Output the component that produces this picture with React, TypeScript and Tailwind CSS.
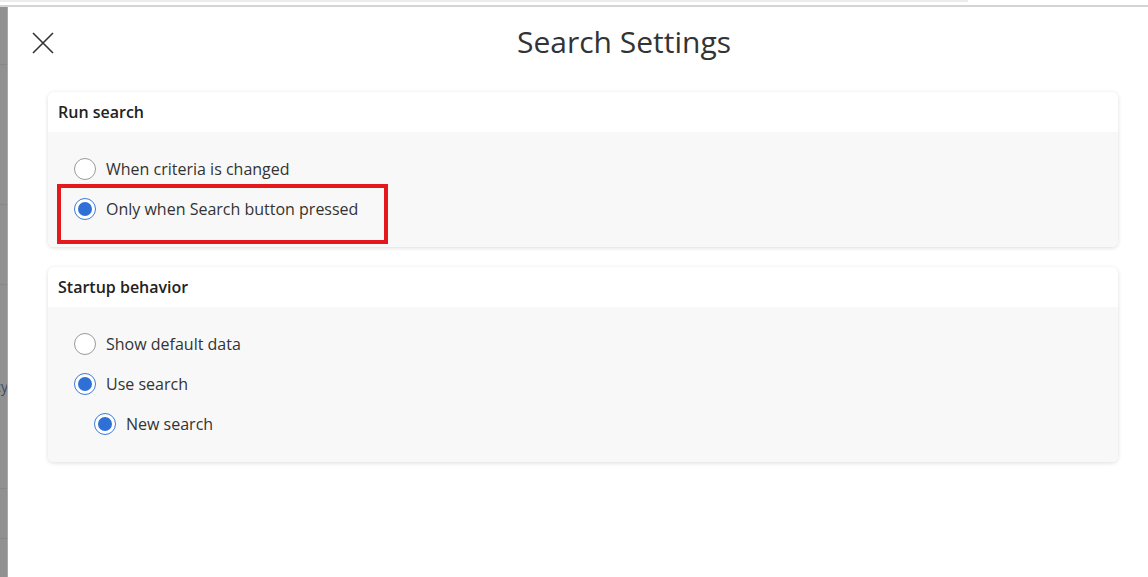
import React from "react";

const font = { fontFamily: '"Open Sans", "Noto Sans", sans-serif' };

const Radio = ({ checked }: { checked: boolean }) => (
  <span
    className={
      "w-[22px] h-[22px] rounded-full border flex items-center justify-center bg-white shrink-0 " +
      (checked ? "border-[#3a7bd8]" : "border-[#9a9a9a]")
    }
  >
    {checked && <span className="w-[14px] h-[14px] rounded-full bg-[#2f70d6]" />}
  </span>
);

const Option = ({ label, checked, indent }: { label: string; checked: boolean; indent?: boolean }) => (
  <div className={"h-[40px] flex items-center gap-[10px] " + (indent ? "pl-[46px]" : "pl-[26px]")}>
    <Radio checked={checked} />
    <span className="text-[16px] text-[#333]">{label}</span>
  </div>
);

const Card = ({ title, children }: { title: string; children: React.ReactNode }) => (
  <div className="rounded-[6px] bg-white shadow-[0_1px_4px_rgba(0,0,0,0.14)] overflow-hidden">
    <div className="h-[40px] flex items-center pl-[10px] text-[16px] font-semibold text-[#222]">{title}</div>
    <div className="relative bg-[#f8f8f8] pt-[17px] pb-[18px]">{children}</div>
  </div>
);

const App = () => {
  return (
    <div className="w-[1148px] h-[577px] flex flex-col bg-white overflow-hidden" style={font}>
      <div className="h-[7px] shrink-0 bg-white border-b-2 border-[#d4d4d4] flex">
        <div className="w-[968px] h-[2px] bg-[#ececec]" />
      </div>
      <div className="flex flex-1">
        <div className="w-[8px] shrink-0 bg-[#919191] border-r border-[#a9a9a9] flex flex-col overflow-hidden">
          <div className="h-[58px] border-b border-[#888]" />
          <div className="h-[140px] border-b border-[#888]" />
          <div className="h-[80px] border-b border-[#888]" />
          <div className="h-[204px] flex items-center justify-end border-b border-[#888]">
            <span className="text-[14px] text-[#3a4a66] -mr-[1px]">cy</span>
          </div>
          <div className="h-[50px] border-b border-[#888]" />
          <div className="h-[50px] border-b border-[#888]" />
        </div>
        <div className="flex-1 flex flex-col">
          <div className="h-[71px] flex items-center">
            <div className="w-[92px] flex items-center pl-[24px] pt-[1px]">
              <svg width="22" height="22" viewBox="0 0 22 22" fill="none" stroke="#333" strokeWidth="1.6">
                <path d="M1 1 L21 21 M21 1 L1 21" />
              </svg>
            </div>
            <div className="flex-1 text-center text-[30px] text-[#333] -mt-[3px]">Search Settings</div>
          </div>
          <div className="pl-[40px] pr-[30px] pt-[14px] flex flex-col gap-[20px]">
            <Card title="Run search">
              <Option label="When criteria is changed" checked={false} />
              <Option label="Only when Search button pressed" checked={true} />
              <div className="absolute left-[9px] top-[52px] w-[331px] h-[60px] border-[4px] border-[#e3191d]" />
            </Card>
            <Card title="Startup behavior">
              <Option label="Show default data" checked={false} />
              <Option label="Use search" checked={true} />
              <Option label="New search" checked={true} indent />
            </Card>
          </div>
        </div>
      </div>
    </div>
  );
};

export default App;
